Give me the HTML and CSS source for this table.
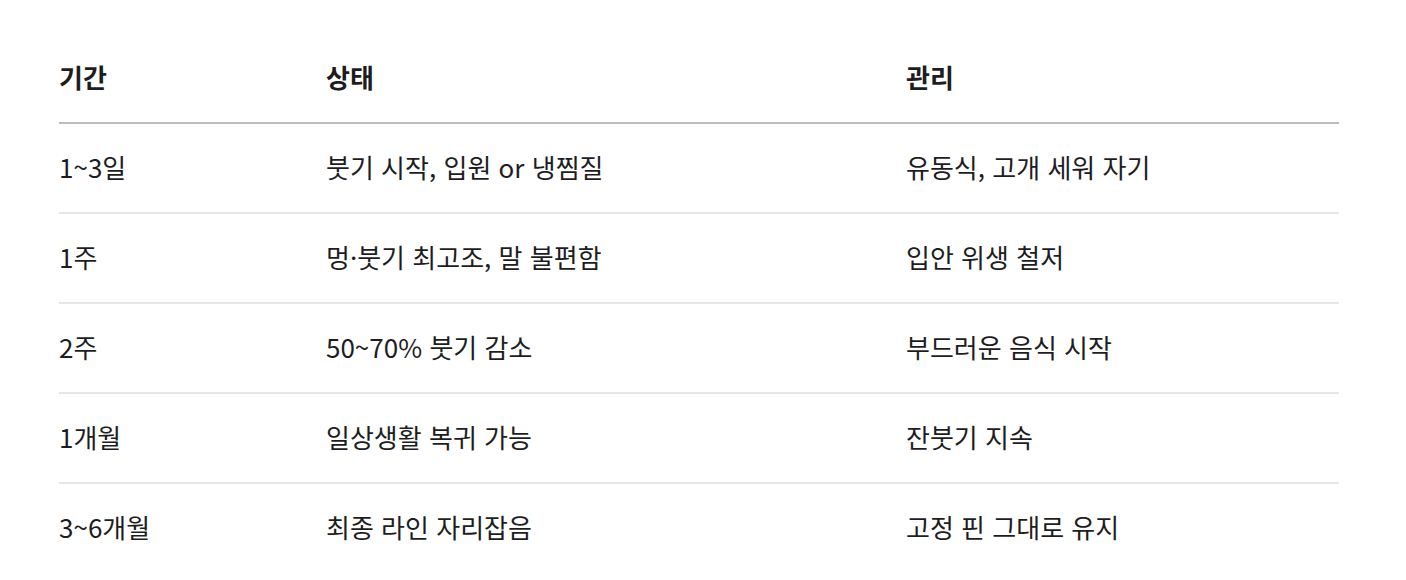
FILE: index.html
```html
<!DOCTYPE html>
<html lang="ko">
<head>
<meta charset="utf-8">
<link rel="stylesheet" href="styles.css">
</head>
<body>
<table class="recovery">
  <colgroup>
    <col class="c1"><col class="c2"><col class="c3">
  </colgroup>
  <thead>
    <tr><th>기간</th><th>상태</th><th>관리</th></tr>
  </thead>
  <tbody>
    <tr><td>1~3일</td><td>붓기 시작, 입원 or 냉찜질</td><td>유동식, 고개 세워 자기</td></tr>
    <tr><td>1주</td><td>멍·붓기 최고조, 말 불편함</td><td>입안 위생 철저</td></tr>
    <tr><td>2주</td><td>50~70% 붓기 감소</td><td>부드러운 음식 시작</td></tr>
    <tr><td>1개월</td><td>일상생활 복귀 가능</td><td>잔붓기 지속</td></tr>
    <tr><td>3~6개월</td><td>최종 라인 자리잡음</td><td>고정 핀 그대로 유지</td></tr>
  </tbody>
</table>
</body>
</html>
```
FILE: styles.css
```css
html, body {
  margin: 0;
  padding: 0;
  background: #fff;
}
body {
  padding: 34px 67px 0 59px;
  font-family: "Noto Sans CJK KR", "Noto Sans", sans-serif;
  color: #1d1d1f;
}
.recovery {
  width: 1280px;
  border-collapse: collapse;
  table-layout: fixed;
  font-size: 26px;
}
.c1 { width: 267px; }
.c2 { width: 580px; }
.c3 { width: 433px; }
.recovery th,
.recovery td {
  text-align: left;
  padding: 0 0 3px 0;
  height: 85px;
  vertical-align: middle;
  line-height: 1.2;
}
.recovery th {
  font-weight: 600;
  border-bottom: 2px solid #bdbdbd;
}
.recovery td {
  font-weight: 400;
  border-bottom: 2px solid #e6e6e6;
}
.recovery tbody tr:last-child td {
  border-bottom: none;
}
```
